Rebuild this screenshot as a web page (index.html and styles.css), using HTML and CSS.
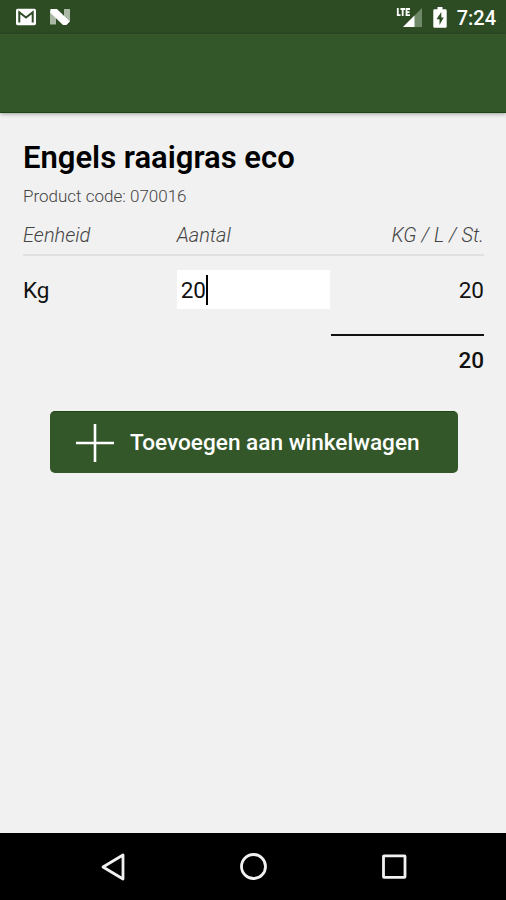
FILE: index.html
```html
<!DOCTYPE html>
<html lang="nl">
<head>
<meta charset="UTF-8">
<meta name="viewport" content="width=device-width, initial-scale=1.0">
<title>Engels raaigras eco</title>
<link rel="stylesheet" href="styles.css">
</head>
<body>

<!-- status bar -->
<div class="status-bar">
  <div class="status-left">
    <svg class="icon-mail" width="22" height="18" viewBox="0 0 22 18">
      <rect x="1" y="0.8" width="20" height="16.4" rx="1.6" fill="#fff"/>
      <path d="M4.3 14.5V4.3L11 9.5l6.7-5.2V14.5" fill="none" stroke="#2d4c24" stroke-width="2"/>
    </svg>
    <svg class="icon-n" width="22" height="18" viewBox="0 0 22 18">
      <path d="M1 4.5L7 8v8.500H1zM15 1h6v13l-6-3.500z" fill="#a9b8a4"/>
      <path d="M1.500 1H8l12.800 12.500-3.300 3.500H14L1 4.500z" fill="#fff"/>
    </svg>
  </div>
  <div class="status-right">
    <svg class="icon-signal" width="27" height="21" viewBox="0 0 27 21">
      <path d="M26 1v19H7z" fill="#6f8968"/>
      <path d="M18.500 8.500V20H7z" fill="#fff"/>
      <path d="M1.800 1v7.200H4.500M4.500 2h4.500M6.700 2v7M14 2h-3.500v6.200H14M10.500 5.100h3" fill="none" stroke="#fff" stroke-width="1.800"/>
    </svg>
    <svg class="icon-battery" width="14" height="21" viewBox="0 0 14 21">
      <path d="M4.500 0h5v2.200H12.500a1.200 1.200 0 0 1 1.200 1.200V19.500a1.200 1.200 0 0 1-1.200 1.200H1.500a1.200 1.200 0 0 1-1.200-1.200V3.400a1.200 1.200 0 0 1 1.200-1.200H4.500z" fill="#fff"/>
      <path d="M8.300 5L3.500 12.300h3V18l4.200-7.500H8.300z" fill="#2d4c24"/>
    </svg>
    <span class="clock">7:24</span>
  </div>
</div>

<div class="toolbar"></div>

<!-- product -->
<main class="content">
  <h1 class="title">Engels raaigras eco</h1>
  <p class="code">Product code: 070016</p>

  <div class="row head">
    <span>Eenheid</span>
    <span>Aantal</span>
    <span class="right">KG / L / St.</span>
  </div>

  <div class="row item">
    <span>Kg</span>
    <div class="amount">20<i class="cursor"></i></div>
    <span class="right">20</span>
  </div>

  <div class="total">20</div>

  <button class="add-button">
    <svg width="38" height="38" viewBox="0 0 38 38">
      <path d="M19 0v38M0 19h38" stroke="#fff" stroke-width="2.6"/>
    </svg>
    <span>Toevoegen aan winkelwagen</span>
  </button>
</main>

<!-- navigation bar -->
<div class="nav-bar">
  <svg width="28" height="28" viewBox="0 0 28 28">
    <path d="M24 2v24L4 14z"/>
  </svg>
  <svg width="28" height="28" viewBox="0 0 28 28">
    <circle cx="13.500" cy="13.500" r="12"/>
  </svg>
  <svg width="28" height="28" viewBox="0 0 28 28">
    <rect x="3.500" y="2.800" width="21.500" height="21.500" rx="0.500"/>
  </svg>
</div>

</body>
</html>
```

FILE: styles.css
```css
body {
  margin: 0;
  height: 900px;
  display: flex;
  flex-direction: column;
  font-family: Roboto, "Liberation Sans", sans-serif;
  background-color: #f1f1f1;
  color: #111;
  overflow: hidden;
}
.status-bar {
  height: 34px;
  display: flex;
  justify-content: space-between;
  box-sizing: border-box;
  padding: 0 10px 0 15px;
  background-color: #2d4c24;
}
.status-left, .status-right {
  display: flex;
  align-items: center;
}
.icon-n {
  margin-left: 12px;
}
.icon-battery {
  margin: 0 10px;
}
.clock {
  color: #fff;
  font-size: 20px;
  font-weight: 500;
  line-height: 34px;
  padding-top: 2px;
}
.toolbar {
  height: 79px;
  background-color: #34572a;
  box-shadow: 0 1px 4px rgba(0, 0, 0, 0.35);
  border-bottom: 1px solid #1e4413;
  box-sizing: border-box;
}
.content {
  flex: 1;
  padding: 25px 22px 0 23px;
}
.title {
  margin: 0;
  font-size: 31px;
  font-weight: 600;
  line-height: 40px;
  color: #000;
}
.code {
  margin: 7px 0 0;
  font-size: 17px;
  font-weight: 300;
  line-height: 22px;
  color: #444;
}
.row {
  display: grid;
  grid-template-columns: repeat(3, 1fr);
  align-items: center;
}
.head {
  height: 49px;
  box-sizing: border-box;
  padding-top: 9px;
  border-bottom: 2px solid #e0e0e0;
  font-size: 20px;
  font-style: italic;
  font-weight: 300;
  color: #444;
}
.right {
  text-align: right;
}
.item {
  margin-top: 14px;
  font-size: 22.5px;
}
.amount {
  display: flex;
  align-items: center;
  height: 39px;
  padding-left: 4px;
  background-color: #fff;
}
.cursor {
  width: 2px;
  height: 30px;
  background-color: #000;
}
.total {
  width: 153px;
  margin: 25px 0 0 auto;
  padding-top: 9px;
  border-top: 2px solid #111;
  font-size: 22.5px;
  font-weight: 500;
  line-height: 30px;
  text-align: right;
}
.add-button {
  display: flex;
  align-items: center;
  width: 408px;
  height: 62px;
  margin: 36px 0 0 27px;
  padding: 0 0 0 26px;
  border: none;
  border-top: 1px solid #1e4413;
  border-radius: 5px;
  background-color: #34572a;
  color: #fff;
  font-family: inherit;
  font-size: 22.6px;
  font-weight: 500;
}
.add-button span {
  margin-left: 16px;
}
.nav-bar {
  height: 67px;
  display: flex;
  justify-content: space-between;
  align-items: center;
  box-sizing: border-box;
  padding: 0 98px 0 99px;
  background-color: #000;
}
.nav-bar svg {
  fill: none;
  stroke: #f1f1f1;
  stroke-width: 2.8;
  stroke-linejoin: round;
}
```
